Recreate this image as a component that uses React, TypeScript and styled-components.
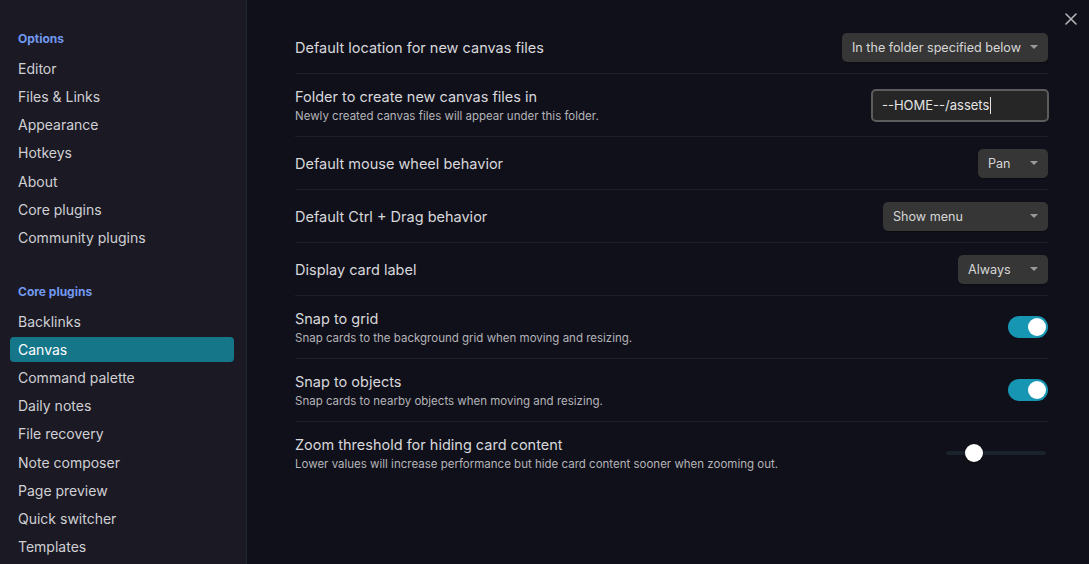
import styled, { createGlobalStyle } from 'styled-components';
import { useState } from 'react';

const GlobalStyle = createGlobalStyle`
  html, body {
    margin: 0;
    padding: 0;
    background: #101018;
    font-family: Inter, 'Noto Sans', sans-serif;
    -webkit-font-smoothing: antialiased;
  }
  #root {
    height: 564px;
  }
`;

const Layout = styled.div`
  display: flex;
  width: 1089px;
  height: 564px;
  overflow: hidden;
  background: #10101a;
  position: relative;
`;

const Sidebar = styled.nav`
  width: 247px;
  flex-shrink: 0;
  box-sizing: border-box;
  background: #1b1a24;
  border-right: 1px solid #1e2a33;
  padding: 28px 12px 0 10px;
  overflow: hidden;
`;

const NavGroup = styled.div`
  margin-bottom: 31px;
`;

const NavTitle = styled.div`
  font-size: 12px;
  font-weight: 700;
  color: #7199f0;
  padding: 0 8px;
  height: 21px;
  line-height: 21px;
  margin-bottom: 7px;
`;

const NavItem = styled.div<{ $active?: boolean }>`
  font-size: 14px;
  color: ${(p) => (p.$active ? '#ffffff' : '#d0d0d4')};
  background: ${(p) => (p.$active ? '#157589' : 'transparent')};
  border-radius: 4px;
  padding: 0 8px;
  height: 25px;
  line-height: 25px;
  margin-bottom: 3.15px;
`;

const Content = styled.main`
  flex: 1;
  padding: 21px 41px 0 48px;
`;

const SettingRow = styled.div`
  display: flex;
  align-items: center;
  justify-content: space-between;
  padding: 11.5px 0;
  min-height: 29px;
  border-top: 1px solid #1a2029;

  &:first-child {
    border-top: none;
  }
`;

const Info = styled.div`
  display: flex;
  flex-direction: column;
`;

const Name = styled.div`
  font-size: 14.5px;
  color: #d8d8dc;
  line-height: 21px;
`;

const Desc = styled.div`
  font-size: 11.5px;
  color: #b4b4b8;
  line-height: 18px;
`;

const Select = styled.div<{ $width: number }>`
  min-width: ${(p) => p.$width}px;
  flex-shrink: 0;
  white-space: nowrap;
  height: 29px;
  box-sizing: border-box;
  background: #363636;
  border-radius: 5px;
  padding: 0 10px;
  display: flex;
  align-items: center;
  justify-content: space-between;
  font-size: 12.6px;
  color: #d6d6d6;
  box-shadow: 0 1px 1px rgba(0, 0, 0, 0.3);
`;

const Caret = styled.span`
  width: 0;
  height: 0;
  border-left: 4px solid transparent;
  border-right: 4px solid transparent;
  border-top: 4px solid #9a9a9a;
  margin-left: 9px;
`;

const TextInput = styled.div`
  width: 178px;
  height: 33px;
  box-sizing: border-box;
  border: 2px solid #5c5c5c;
  border-radius: 5px;
  background: #262626;
  display: flex;
  align-items: center;
  padding: 0 9px;
  font-size: 13px;
  color: #e4e4e4;
  margin-right: -1px;
`;

const TextCaret = styled.span`
  display: inline-block;
  width: 1px;
  height: 17px;
  background: #e4e4e4;
  margin-left: 1px;
`;

const Toggle = styled.div<{ $on: boolean }>`
  width: 40px;
  height: 22px;
  border-radius: 11px;
  background: ${(p) => (p.$on ? '#1796b3' : '#3a3a3a')};
  position: relative;
  cursor: pointer;

  &::after {
    content: '';
    position: absolute;
    top: 2px;
    left: ${(p) => (p.$on ? '20px' : '2px')};
    width: 18px;
    height: 18px;
    border-radius: 50%;
    background: #ffffff;
  }
`;

const Slider = styled.div`
  width: 100px;
  height: 4px;
  border-radius: 2px;
  background: #1a232b;
  position: relative;
  margin-right: 2px;
`;

const Thumb = styled.div`
  position: absolute;
  top: -7px;
  width: 18px;
  height: 18px;
  border-radius: 50%;
  background: #ffffff;
  box-shadow: 0 1px 2px rgba(0, 0, 0, 0.4);
`;

const CloseButton = styled.div`
  position: absolute;
  top: 10px;
  right: 11px;
  width: 14px;
  height: 14px;
  color: #b4b4b8;
`;

const ToggleSetting = ({ name, desc }: { name: string; desc: string }) => {
  const [on, setOn] = useState(true);
  return (
    <SettingRow>
      <Info>
        <Name>{name}</Name>
        <Desc>{desc}</Desc>
      </Info>
      <Toggle $on={on} onClick={() => setOn(!on)} />
    </SettingRow>
  );
};

const App = () => {
  const options = [
    'Editor',
    'Files & Links',
    'Appearance',
    'Hotkeys',
    'About',
    'Core plugins',
    'Community plugins',
  ];
  const plugins = [
    'Backlinks',
    'Canvas',
    'Command palette',
    'Daily notes',
    'File recovery',
    'Note composer',
    'Page preview',
    'Quick switcher',
    'Templates',
  ];
  const zoom = 0.1;

  return (
    <>
      <GlobalStyle />
      <Layout>
        <Sidebar>
          <NavGroup>
            <NavTitle>Options</NavTitle>
            {options.map((item) => (
              <NavItem key={item}>{item}</NavItem>
            ))}
          </NavGroup>
          <NavGroup>
            <NavTitle>Core plugins</NavTitle>
            {plugins.map((item) => (
              <NavItem key={item} $active={item === 'Canvas'}>
                {item}
              </NavItem>
            ))}
          </NavGroup>
        </Sidebar>
        <Content>
          <SettingRow>
            <Name>Default location for new canvas files</Name>
            <Select $width={205}>
              In the folder specified below
              <Caret />
            </Select>
          </SettingRow>
          <SettingRow>
            <Info>
              <Name>Folder to create new canvas files in</Name>
              <Desc>Newly created canvas files will appear under this folder.</Desc>
            </Info>
            <TextInput>
              --HOME--/assets
              <TextCaret />
            </TextInput>
          </SettingRow>
          <SettingRow>
            <Name>Default mouse wheel behavior</Name>
            <Select $width={70}>
              Pan
              <Caret />
            </Select>
          </SettingRow>
          <SettingRow>
            <Name>Default Ctrl + Drag behavior</Name>
            <Select $width={165}>
              Show menu
              <Caret />
            </Select>
          </SettingRow>
          <SettingRow>
            <Name>Display card label</Name>
            <Select $width={90}>
              Always
              <Caret />
            </Select>
          </SettingRow>
          <ToggleSetting
            name="Snap to grid"
            desc="Snap cards to the background grid when moving and resizing."
          />
          <ToggleSetting
            name="Snap to objects"
            desc="Snap cards to nearby objects when moving and resizing."
          />
          <SettingRow>
            <Info>
              <Name>Zoom threshold for hiding card content</Name>
              <Desc>
                Lower values will increase performance but hide card content sooner when zooming out.
              </Desc>
            </Info>
            <Slider>
              <Thumb style={{ left: `${zoom * 100 + 9}px` }} />
            </Slider>
          </SettingRow>
        </Content>
        <CloseButton>
          <svg width="14" height="14" viewBox="0 0 14 14" fill="none">
            <path d="M2 2L12 12M12 2L2 12" stroke="currentColor" strokeWidth="1.6" strokeLinecap="round" />
          </svg>
        </CloseButton>
      </Layout>
    </>
  );
};

export default App;
